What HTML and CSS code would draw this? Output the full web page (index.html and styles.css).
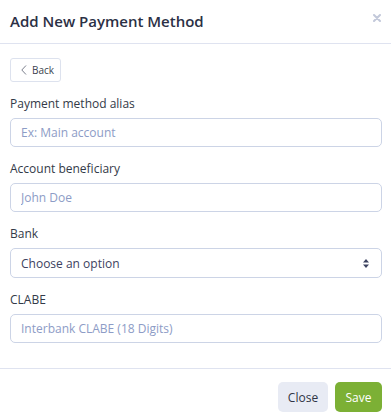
FILE: index.html
```html
<!DOCTYPE html>
<html lang="en">
<head>
<meta charset="utf-8">
<title>Add New Payment Method</title>
<link rel="stylesheet" href="styles.css">
</head>
<body>
<div class="modal">
  <header class="modal-header">
    <h1 class="modal-title">Add New Payment Method</h1>
    <button class="close-x" aria-label="Close">
      <svg width="8" height="8" viewBox="0 0 8 8"><path d="M1 1L7 7M7 1L1 7" stroke="#c3c9da" stroke-width="2" stroke-linecap="round"/></svg>
    </button>
  </header>
  <div class="modal-body">
    <button class="back-btn">
      <svg width="6" height="10" viewBox="0 0 6 10"><path d="M5 0.5L0.8 5L5 9.5" fill="none" stroke="#7a7f8c" stroke-width="1"/></svg>
      <span>Back</span>
    </button>
    <div class="field">
      <label class="label">Payment method alias</label>
      <input class="input" type="text" placeholder="Ex: Main account">
    </div>
    <div class="field">
      <label class="label">Account beneficiary</label>
      <input class="input" type="text" placeholder="John Doe">
    </div>
    <div class="field">
      <label class="label">Bank</label>
      <div class="select">
        <span>Choose an option</span>
        <svg width="6" height="9" viewBox="0 0 6 9"><path d="M3 0L6 3.5H0Z M3 9L0 5.5H6Z" fill="#3c4260"/></svg>
      </div>
    </div>
    <div class="field">
      <label class="label">CLABE</label>
      <input class="input" type="text" placeholder="Interbank CLABE (18 Digits)">
    </div>
  </div>
  <footer class="modal-footer">
    <button class="btn btn-light">Close</button>
    <button class="btn btn-green">Save</button>
  </footer>
</div>
</body>
</html>
```

FILE: styles.css
```css
* { box-sizing: border-box; }
body {
  margin: 0;
  background: #fff;
  font-family: "Open Sans", "Noto Sans", sans-serif;
  color: #333a48;
}
.modal { width: 391px; }
.modal-header {
  height: 44px;
  border-bottom: 1px solid #dfe3f0;
  display: flex;
  align-items: center;
  justify-content: space-between;
  padding: 0 10px 1px 10px;
}
.modal-title {
  margin: 0;
  font-size: 15px;
  font-weight: 600;
  color: #2b3045;
}
.close-x {
  border: 0;
  background: none;
  padding: 0;
  width: 8px;
  height: 8px;
  display: flex;
  margin-top: -7px;
}
.modal-body {
  padding: 14px 9px 25px 10px;
}
.back-btn {
  display: flex;
  align-items: center;
  gap: 5px;
  height: 24px;
  width: 51px;
  padding: 0 0 0 10px;
  border: 1px solid #dde2ee;
  border-radius: 3px;
  background: #fff;
  font-family: inherit;
  font-size: 10px;
  color: #3a3f4d;
}
.field { margin-top: 14px; }
.label {
  display: block;
  font-size: 12px;
  line-height: 16px;
  color: #333a48;
  margin-bottom: 6px;
}
.input, .select {
  display: flex;
  align-items: center;
  width: 100%;
  height: 29px;
  border: 1px solid #ccd4e6;
  border-radius: 5px;
  padding: 0 10px;
  font-family: inherit;
  font-size: 12px;
  color: #333a48;
  background: #fff;
  outline: none;
}
.input::placeholder { color: #8d9cc6; }
.select {
  height: 30px;
  justify-content: space-between;
  padding-right: 12px;
  color: #3c4260;
}
.modal-footer {
  border-top: 1px solid #dfe3f0;
  display: flex;
  justify-content: flex-end;
  gap: 7px;
  padding: 13px 9px 0 0;
}
.btn {
  height: 30px;
  border: 0;
  border-radius: 5px;
  font-family: inherit;
  font-size: 12px;
  padding: 0;
}
.btn-light {
  width: 50px;
  background: #e8ebf4;
  color: #2f3445;
}
.btn-green {
  width: 47px;
  background: #7cb035;
  color: #fff;
}
```
